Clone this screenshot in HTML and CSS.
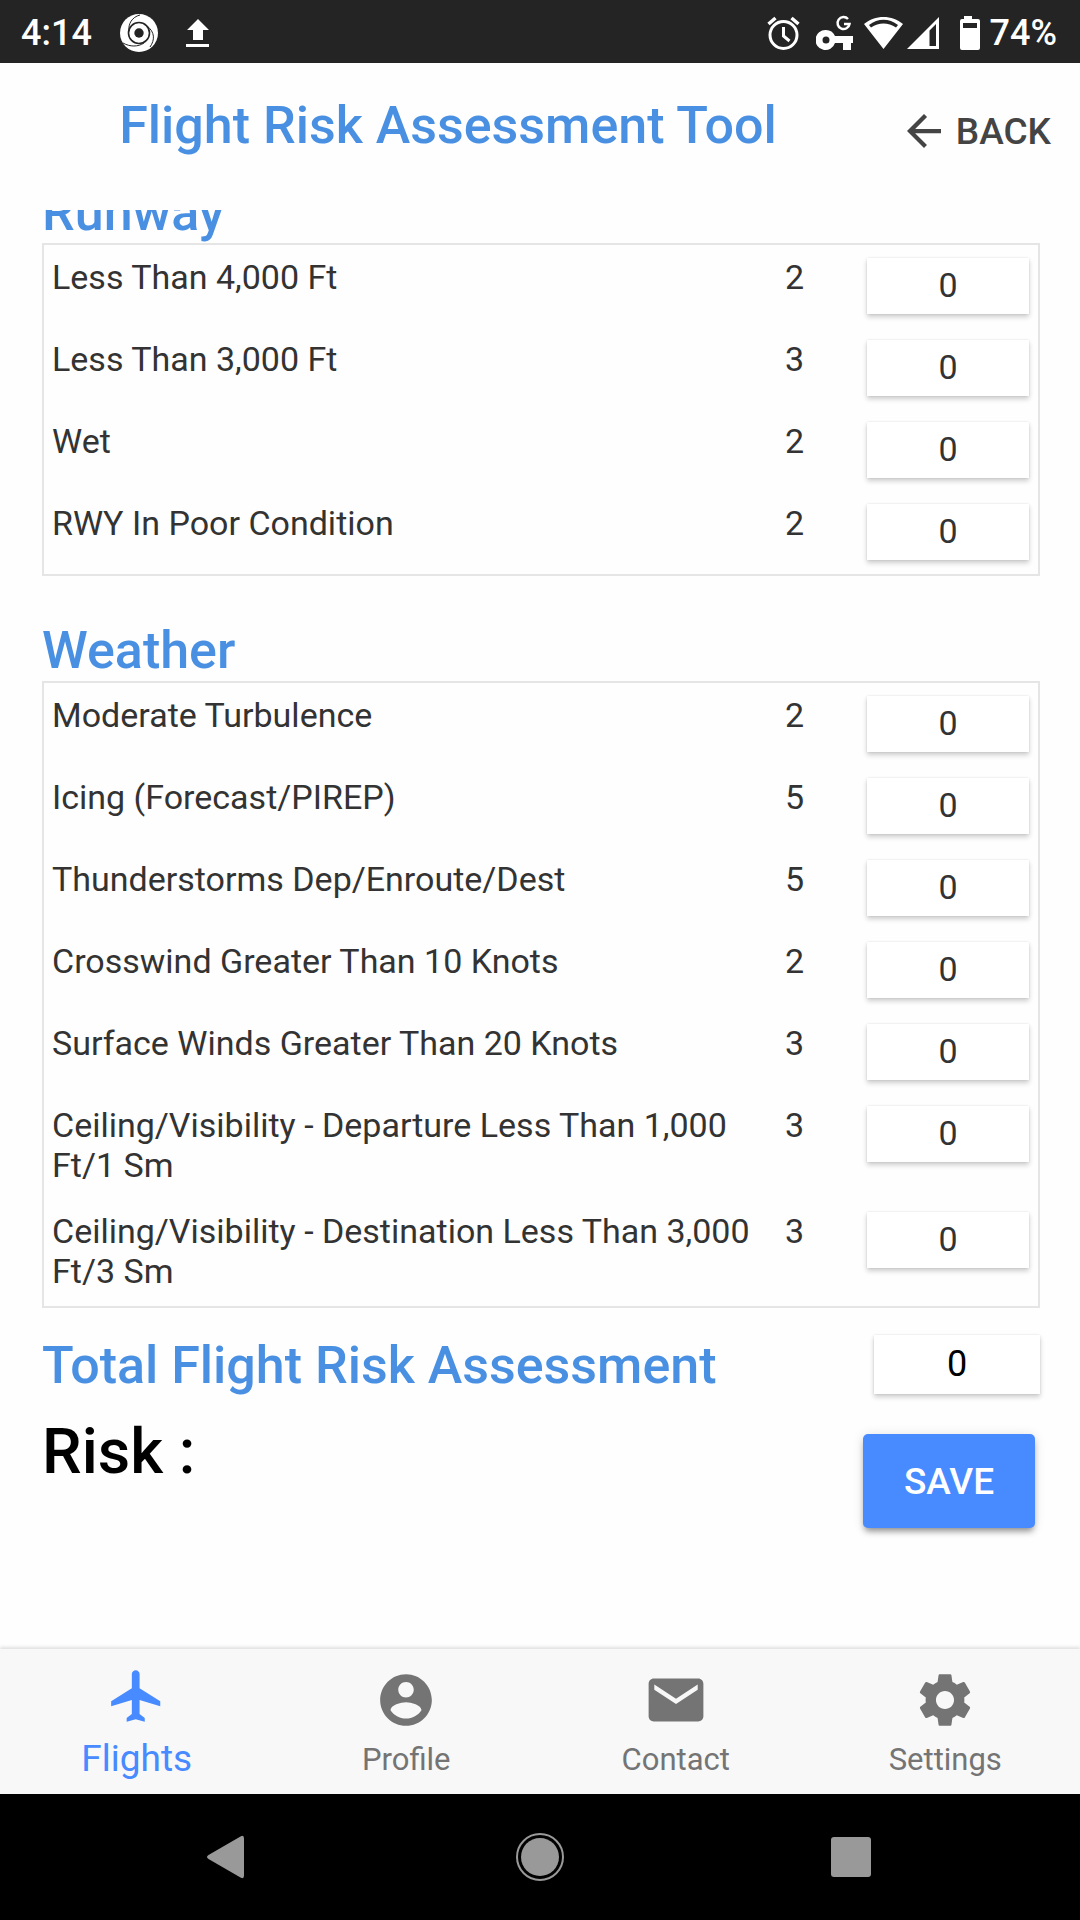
FILE: index.html
```html
<!DOCTYPE html>
<html lang="en">
<head>
    <meta charset="UTF-8">
    <meta name="viewport" content="width=device-width, initial-scale=1.0">
    <title>Flight Risk Assessment Tool</title>
    <link rel="stylesheet" href="styles.css">
</head>
<body>
    <div class="status-bar">
        <span class="clock">4:14</span>
        <svg class="status-app" width="38" height="38" viewBox="0 0 38 38">
            <circle cx="19" cy="19" r="19" fill="#fff"/>
            <g fill="none" stroke="#242424">
                <circle cx="19" cy="19" r="10.5" stroke-width="1.6"/>
                <path d="M9 17C8 10 12 3 20 1M27 12c8 6 8 14 3 21M24 29c-6 4-14 4-21 0" stroke-width="1"/>
            </g>
            <circle cx="19" cy="19" r="4.7" fill="#242424"/>
        </svg>
        <svg width="24" height="28" viewBox="0 0 24 28" fill="#fff">
            <path d="M12 0l11 11h-6v10H7V11H1zM0 25h23v3H0z"/>
        </svg>
        <div class="status-right">
            <svg width="45" height="36" viewBox="0 0 45 36" fill="none" stroke="#fff">
                <circle cx="16.500" cy="20" r="13.500" stroke-width="3"/>
                <path d="M16.500 12v9l6 5" stroke-width="3"/>
                <path d="M1.500 9l7-6M31.500 9l-7-6" stroke-width="3.500"/>
            </svg>
            <svg width="44" height="36" viewBox="0 0 44 36">
                <path fill="#fff" fill-rule="evenodd" d="M10 15a10 10 0 0 1 9 6h18v7h-2v7h-8v-7h-8a10 10 0 1 1-9-13zm0 6.500a3.500 3.500 0 1 0 0 7 3.500 3.500 0 0 0 0-7z"/>
                <path fill="none" stroke="#fff" stroke-width="2.500" d="M32 4a6 6 0 1 0 1.500 5H28"/>
            </svg>
            <svg width="39" height="36" viewBox="0 0 39 36">
                <path fill="#fff" fill-rule="evenodd" d="M0 9C11-.500 28-.500 39 9L19.500 34zM5 10l2 2.500c8-5.500 17-5.500 25 0l2-2.500C25 3 14 3 5 10z"/>
            </svg>
            <svg width="43" height="36" viewBox="0 0 43 36">
                <path fill="#fff" fill-rule="evenodd" d="M0 34L32 2v32zM22.500 15.500V31H29V9z"/>
            </svg>
            <svg width="32" height="36" viewBox="0 0 32 36">
                <path fill="#fff" fill-rule="evenodd" d="M10 1h8v3h6q2 0 2 2v27q0 2-2 2H8q-2 0-2-2V6q0-2 2-2h2zM9 8v5h14V8z"/>
            </svg>
            <span>74%</span>
        </div>
    </div>

    <header class="page-header">
        <h1>Flight Risk Assessment Tool</h1>
        <button type="button" class="back-button">
            <svg width="34" height="34" viewBox="4 4 16 16" fill="#444"><path d="M20 11H7.830l5.590-5.590L12 4l-8 8 8 8 1.410-1.410L7.830 13H20v-2z"/></svg>
            BACK
        </button>
    </header>

    <main class="content">
        <form class="scroll-area">
            <h2>Runway</h2>
            <div class="risk-box">
                <div class="risk-row">
                    <label for="rwy4000">Less Than 4,000 Ft</label>
                    <span>2</span>
                    <input type="text" id="rwy4000" value="0">
                </div>
                <div class="risk-row">
                    <label for="rwy3000">Less Than 3,000 Ft</label>
                    <span>3</span>
                    <input type="text" id="rwy3000" value="0">
                </div>
                <div class="risk-row">
                    <label for="wet">Wet</label>
                    <span>2</span>
                    <input type="text" id="wet" value="0">
                </div>
                <div class="risk-row">
                    <label for="poor">RWY In Poor Condition</label>
                    <span>2</span>
                    <input type="text" id="poor" value="0">
                </div>
            </div>

            <h2>Weather</h2>
            <div class="risk-box">
                <div class="risk-row">
                    <label for="turbulence">Moderate Turbulence</label>
                    <span>2</span>
                    <input type="text" id="turbulence" value="0">
                </div>
                <div class="risk-row">
                    <label for="icing">Icing (Forecast/PIREP)</label>
                    <span>5</span>
                    <input type="text" id="icing" value="0">
                </div>
                <div class="risk-row">
                    <label for="storms">Thunderstorms Dep/Enroute/Dest</label>
                    <span>5</span>
                    <input type="text" id="storms" value="0">
                </div>
                <div class="risk-row">
                    <label for="crosswind">Crosswind Greater Than 10 Knots</label>
                    <span>2</span>
                    <input type="text" id="crosswind" value="0">
                </div>
                <div class="risk-row">
                    <label for="surface">Surface Winds Greater Than 20 Knots</label>
                    <span>3</span>
                    <input type="text" id="surface" value="0">
                </div>
                <div class="risk-row">
                    <label for="departure">Ceiling/Visibility - Departure Less Than 1,000 Ft/1 Sm</label>
                    <span>3</span>
                    <input type="text" id="departure" value="0">
                </div>
                <div class="risk-row">
                    <label for="destination">Ceiling/Visibility - Destination Less Than 3,000 Ft/3 Sm</label>
                    <span>3</span>
                    <input type="text" id="destination" value="0">
                </div>
            </div>

            <div class="total-row">
                <label for="total">Total Flight Risk Assessment</label>
                <input type="text" id="total" value="0" readonly>
            </div>
            <div class="result-row">
                <p>Risk :</p>
                <button type="button" class="save-button">SAVE</button>
            </div>
        </form>
    </main>

    <nav class="tabs">
        <a href="#flights" class="tab active">
            <svg width="62" height="62" viewBox="0 0 24 24"><path d="M21 16v-2l-8-5V3.500c0-.830-.670-1.500-1.500-1.500S10 2.670 10 3.500V9l-8 5v2l8-2.500V19l-2 1.500V22l3.500-1 3.500 1v-1.500L13 19v-5.500l8 2.500z"/></svg>
            Flights
        </a>
        <a href="#profile" class="tab">
            <svg width="62" height="62" viewBox="0 0 24 24"><path d="M12 2C6.480 2 2 6.480 2 12s4.480 10 10 10 10-4.480 10-10S17.520 2 12 2zm0 3c1.660 0 3 1.340 3 3s-1.340 3-3 3-3-1.340-3-3 1.340-3 3-3zm0 14.200c-2.500 0-4.710-1.280-6-3.220.030-1.990 4-3.080 6-3.080 1.990 0 5.970 1.090 6 3.080-1.290 1.940-3.500 3.220-6 3.220z"/></svg>
            Profile
        </a>
        <a href="#contact" class="tab">
            <svg width="62" height="62" viewBox="0 0 24 24"><path d="M20.600 3.700H3.400c-1.100 0-2 .900-2 2v12.600c0 1.100.900 2 2 2h17.200c1.100 0 2-.900 2-2V5.700c0-1.100-.900-2-2-2zm-.200 4.300L12 13.500 3.600 8V6l8.400 5.500L20.400 6z"/></svg>
            Contact
        </a>
        <a href="#settings" class="tab">
            <svg width="62" height="62" viewBox="0 0 24 24"><path d="M19.430 12.980c.040-.320.070-.640.070-.980s-.030-.660-.070-.980l2.110-1.650c.190-.150.240-.420.120-.640l-2-3.460c-.120-.220-.390-.300-.610-.220l-2.490 1c-.520-.400-1.080-.730-1.690-.980l-.380-2.650A.488.488 0 0 0 14 2h-4c-.250 0-.460.180-.490.420l-.380 2.650c-.610.250-1.170.590-1.690.980l-2.490-1c-.230-.090-.490 0-.610.220l-2 3.460c-.130.220-.070.490.120.640l2.110 1.650c-.040.320-.070.650-.070.980s.030.660.070.980l-2.110 1.650c-.190.150-.240.420-.120.640l2 3.460c.120.220.390.300.610.220l2.490-1c.520.400 1.080.730 1.690.980l.380 2.650c.030.240.240.420.490.420h4c.250 0 .460-.180.490-.420l.380-2.650c.610-.250 1.170-.590 1.690-.980l2.490 1c.230.090.490 0 .610-.220l2-3.460c.120-.220.070-.490-.120-.640l-2.110-1.650zM12 15.500c-1.930 0-3.500-1.570-3.500-3.500s1.570-3.500 3.500-3.500 3.500 1.570 3.500 3.500-1.570 3.500-3.500 3.500z"/></svg>
            Settings
        </a>
    </nav>

    <div class="system-nav">
        <button type="button" aria-label="Back">
            <svg width="50" height="50" viewBox="0 0 50 50"><path d="M36.500 4.500Q40 2.500 40 6.500v37q0 4-3.500 2L4.500 27q-3-2 0-4z"/></svg>
        </button>
        <button type="button" aria-label="Home">
            <svg width="50" height="50" viewBox="0 0 50 50"><circle cx="25" cy="25" r="19"/><circle cx="25" cy="25" r="23" fill="none" stroke="#999" stroke-width="2"/></svg>
        </button>
        <button type="button" aria-label="Recents">
            <svg width="50" height="50" viewBox="0 0 50 50"><rect x="5" y="5" width="40" height="40" rx="3"/></svg>
        </button>
    </div>
</body>
</html>
```
FILE: styles.css
```css
* {
    box-sizing: border-box;
}
body {
    display: flex;
    flex-direction: column;
    height: 100vh;
    margin: 0;
    font-family: Roboto, sans-serif;
    background: #fefefe;
    color: #333;
}
button, input {
    font-family: inherit;
    border: none;
    padding: 0;
}
button {
    cursor: pointer;
}
h1, h2, p {
    margin: 0;
}

/* status bar */
.status-bar {
    display: flex;
    align-items: center;
    height: 63px;
    padding: 2px 23px 0 21px;
    background: #242424;
    color: #fff;
    font-size: 36px;
    font-weight: 500;
}
.status-app {
    margin: 0 28px;
}
.status-right {
    display: flex;
    align-items: center;
    gap: 4px;
    margin-left: auto;
}

/* header */
.page-header {
    display: flex;
    align-items: flex-start;
    padding: 33px 29px 44px 0;
}
h1, h2 {
    color: #4990e2;
    font-size: 52px;
    font-weight: 500;
    line-height: 60px;
}
h1 {
    flex: 1;
    text-align: center;
}
.back-button {
    display: flex;
    align-items: center;
    gap: 15px;
    height: 70px;
    padding-left: 11px;
    background: none;
    color: #444;
    font-size: 37px;
    font-weight: 500;
}

/* content */
.content {
    flex: 1;
    min-height: 0;
    overflow: hidden;
    padding: 0 40px 0 42px;
}
.scroll-area {
    margin-top: -27px;
}
.risk-box {
    padding: 0 9px 1px 8px;
    border: 2px solid #e5e5e5;
    font-size: 34px;
    line-height: 40px;
}
.risk-box + h2 {
    margin-top: 45px;
}
.risk-row {
    display: grid;
    grid-template-columns: 1fr 60px 162px;
    column-gap: 22px;
    align-items: start;
    padding: 12px 0 14px;
}
.risk-row input, .total-row input {
    width: 100%;
    height: 56px;
    padding-bottom: 2px;
    background: #fff;
    box-shadow: 0 3px 5px rgba(0, 0, 0, 0.2), 0 0 2px rgba(0, 0, 0, 0.1);
    color: #333;
    font-size: 34px;
    text-align: center;
}
.risk-row input {
    margin: 1px 0 -1px;
}
.total-row {
    display: flex;
    justify-content: space-between;
    padding-top: 27px;
}
.total-row label {
    color: #4990e2;
    font-size: 52px;
    font-weight: 500;
    line-height: 62px;
}
.total-row input {
    width: 166px;
    height: 59px;
    color: #000;
    font-size: 36px;
}
.result-row {
    display: flex;
    justify-content: space-between;
    align-items: flex-start;
    padding: 17px 5px 0 0;
    color: #000;
    font-size: 63px;
    font-weight: 500;
    line-height: 76px;
}
.save-button {
    width: 172px;
    height: 94px;
    margin-top: 20px;
    border-radius: 5px;
    background: #488aff;
    box-shadow: 0 5px 6px -2px rgba(0, 0, 0, 0.4), 0 1px 12px rgba(0, 0, 0, 0.12);
    color: #fff;
    font-size: 37px;
    font-weight: 500;
}

/* bottom tabs */
.tabs {
    display: grid;
    grid-template-columns: repeat(4, 1fr);
    height: 145px;
    padding-left: 2px;
    background: #f8f8f8;
    box-shadow: 0 -2px 3px rgba(0, 0, 0, 0.12);
}
.tab {
    display: flex;
    flex-direction: column;
    align-items: center;
    gap: 9px;
    padding-top: 20px;
    color: #747474;
    font-size: 31px;
    line-height: 40px;
    text-decoration: none;
}
.tab svg {
    fill: currentColor;
}
.tab.active {
    gap: 12px;
    padding-top: 16px;
    color: #488aff;
    font-size: 37px;
}

/* android navigation */
.system-nav {
    display: flex;
    justify-content: center;
    align-items: center;
    gap: 261px;
    height: 126px;
    background: #000;
}
.system-nav button {
    display: flex;
    background: none;
}
.system-nav svg {
    fill: #999;
}
```
